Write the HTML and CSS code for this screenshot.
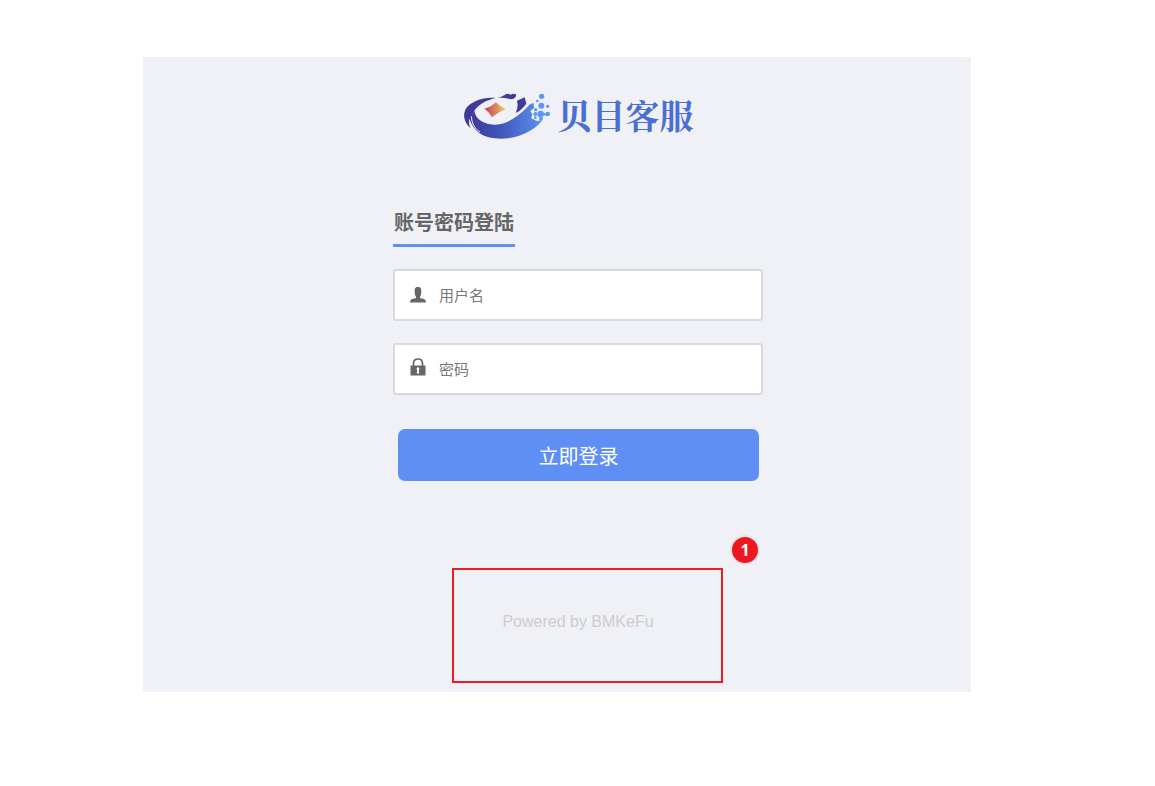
FILE: index.html
```html
<!DOCTYPE html>
<html lang="zh-CN">
<head>
<meta charset="utf-8">
<meta name="viewport" content="width=device-width, initial-scale=1">
<title>贝目客服</title>
<link rel="stylesheet" href="styles.css">
</head>
<body>
<main class="panel">
  <header class="brand">
    <svg class="brand-mark" viewBox="0 0 309 180" aria-hidden="true">
      <defs>
        <linearGradient id="hull" x1="0" y1="0" x2="1" y2="0">
          <stop offset="0" stop-color="#403a9b"/><stop offset=".35" stop-color="#3e51b4"/><stop offset="1" stop-color="#5b91f1"/>
        </linearGradient>
        <linearGradient id="gem" x1="0" y1="0" x2="1" y2="0">
          <stop offset="0" stop-color="#c83f60"/><stop offset=".55" stop-color="#dc8760"/><stop offset="1" stop-color="#f2d45f"/>
        </linearGradient>
      </defs>
      <path fill="#403a9b" d="M122 39C87 35 44 49 31 74C23 91 28 113 47 130C41 119 41 108 44 101C47 114 54 125 62 134C48 115 46 94 59 76C72 57 96 45 122 39Z"/>
      <path fill="url(#hull)" d="M58 77C61 103 88 119 122 119C158 118 189 93 215 68Q226 55 235 54L238 68L226 78L232 88L229 100L246 108L262 106C241 134 195 161 137 161C90 160 52 142 50 101C50 91 53 83 58 77Z"/>
      <path fill="#403a9b" d="M120 38Q136 39 149 30Q158 23 167 30L171 26L184 28Q184 37 176 41L166 43Q151 37 120 38ZM186 47L209 37L214 56L206 66Q196 78 182 84Q191 66 186 47Z"/>
      <path fill="url(#gem)" d="M123 52Q134 64 153 73Q131 80 110 97Q104 82 88 71Q108 66 123 52Z"/>
      <g fill="#5b96f7"><circle cx="260" cy="34" r="8"/><circle cx="247" cy="48" r="4"/><circle cx="259" cy="62" r="9"/><circle cx="278" cy="64" r="5"/><circle cx="242" cy="74" r="5"/><circle cx="241" cy="87" r="6"/><circle cx="257" cy="87" r="10"/><circle cx="268" cy="88" r="4"/><circle cx="278" cy="87" r="7"/><circle cx="241" cy="98" r="4"/><circle cx="258" cy="101" r="6"/></g>
      <path stroke="#edf2fb" stroke-width="3" fill="none" d="M49 94C51 117 59 131 75 141"/>
    </svg>
    <span class="brand-name">贝目客服</span>
  </header>

  <form class="login">
    <h1 class="login-title">账号密码登陆</h1>
    <label class="field">
      <svg class="field-icon" viewBox="0 0 16 16" aria-hidden="true"><path fill="#666" d="M8 0C5 0 4.4 2 4.7 5C4.9 8 5.5 9 6 10V11L1.5 12.2Q0 13 0 15.5H16Q16 13 14.5 12.2L10 11V10C10.5 9 11.1 8 11.3 5C11.6 2 11 0 8 0Z"/></svg>
      <input class="field-input" type="text" name="username" placeholder="用户名" aria-label="用户名">
    </label>
    <label class="field">
      <svg class="field-icon lock" viewBox="0 0 16 18" aria-hidden="true"><path fill="none" stroke="#666" stroke-width="1.7" d="M3.5 8V5.5C3.5 2.5 5.3 1 8 1S12.5 2.5 12.5 5.5V8"/><path fill="#666" fill-rule="evenodd" d="M.5 7.5H15.5V17.5H.5ZM8 9.3A1.5 1.5 0 0 0 7.2 12L6.8 15.6H9.2L8.8 12A1.5 1.5 0 0 0 8 9.3Z"/></svg>
      <input class="field-input" type="password" name="password" placeholder="密码" aria-label="密码">
    </label>
    <button class="submit" type="submit">立即登录</button>
  </form>

  <footer class="footer">
    <span class="powered">Powered by BMKeFu</span>
    <div class="callout"><span class="callout-badge">1</span></div>
  </footer>
</main>
</body>
</html>
```
FILE: styles.css
```css
* { box-sizing: border-box; }

body {
  margin: 0;
  padding: 57px 184px 40px 143px;
  background: #fff;
  font-family: "Liberation Sans", "Noto Sans CJK SC", sans-serif;
}

.panel {
  display: flex;
  flex-direction: column;
  align-items: center;
  padding: 28px 0 9px 42px;
  background: #f0f1f6;
}

.brand {
  display: flex;
  align-items: center;
  margin-bottom: 63px;
  padding-right: 8px;
}

.brand-mark {
  width: 103px;
  height: 60px;
}

.brand-name {
  color: #4a6fd2;
  font-family: "Noto Serif CJK SC", "Noto Sans CJK SC", serif;
  font-size: 34px;
  font-weight: 700;
  line-height: 60px;
}

.login {
  display: flex;
  flex-direction: column;
  width: 100%;
  max-width: 370px;
  gap: 22px;
}

.login-title {
  align-self: flex-start;
  margin: 0;
  padding: 0 1px 6px;
  border-bottom: 3px solid #5e90f5;
  color: #666;
  font-size: 20px;
  font-weight: 700;
  line-height: 30px;
}

.field {
  display: flex;
  align-items: center;
  height: 52px;
  padding: 0 15px;
  border: 2px solid #d9dadc;
  border-radius: 3px;
  background: #fff;
}

.field-icon {
  flex: none;
  width: 16px;
  height: 16px;
}

.lock {
  height: 18px;
  margin-bottom: 4px;
}

.field-input {
  flex: 1;
  min-width: 0;
  height: 100%;
  padding: 0 13px;
  border: 0;
  outline: 0;
  background: transparent;
  color: #555;
  font-family: inherit;
  font-size: 15px;
}

.field-input::placeholder { color: #777; }

.submit {
  height: 52px;
  margin: 12px 4px 0 5px;
  padding: 0;
  border: 0;
  border-radius: 7px;
  background: #5f8ff4;
  color: #fff;
  font-family: inherit;
  font-size: 20px;
  font-weight: 400;
}

.footer {
  position: relative;
  width: 100%;
  max-width: 370px;
  margin-top: 87px;
  padding: 42px 0 49px;
  text-align: center;
}

.powered {
  display: block;
  color: #ccc;
  font-size: 16px;
  line-height: 24px;
}

.callout {
  position: absolute;
  inset: 0 40px 0 59px;
  border: 2px solid #ed1c24;
}

.callout-badge {
  position: absolute;
  top: -35px;
  right: -39px;
  width: 30px;
  height: 30px;
  border: 2px solid #e4e5e7;
  border-radius: 50%;
  background: #ed171f;
  color: #fff;
  font-family: "Open Sans", sans-serif;
  font-size: 16px;
  font-weight: 700;
  line-height: 26px;
  text-align: center;
}
```
